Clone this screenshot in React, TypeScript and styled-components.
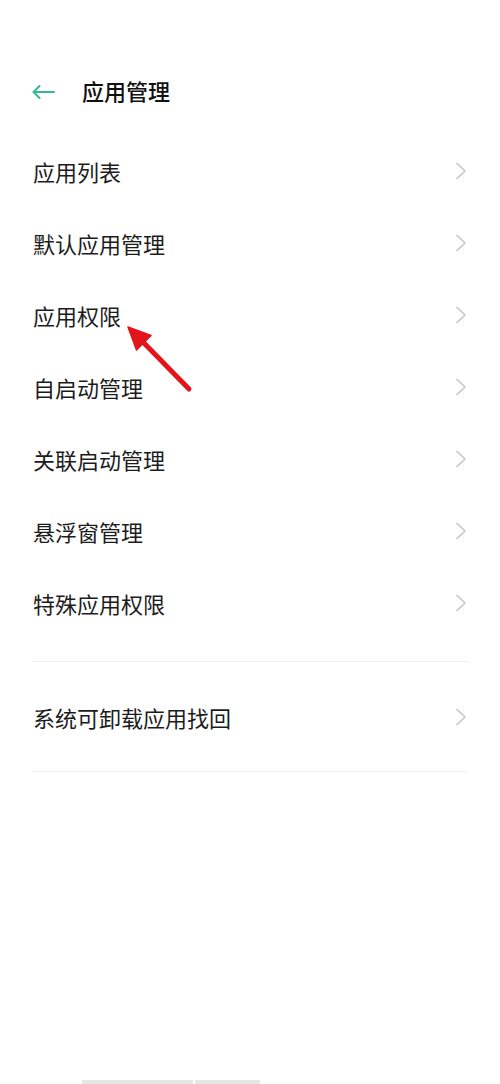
import React from 'react';
import styled, { createGlobalStyle } from 'styled-components';

const GlobalStyle = createGlobalStyle`
  html,
  body {
    margin: 0;
    padding: 0;
    background-color: #ffffff;
  }

  body {
    overflow: hidden;
    font-family: 'Noto Sans CJK SC', 'Noto Sans', sans-serif;
    color: #1c1c1c;
  }
`;

const Page = styled.div`
  position: relative;
  width: 500px;
  height: 1084px;
  display: flex;
  flex-direction: column;
  padding-top: 62px;
  box-sizing: border-box;
  background: #ffffff;
`;

const Header = styled.div`
  height: 56px;
  display: flex;
  align-items: center;
  padding-left: 31px;
`;

const BackButton = styled.button`
  width: 24px;
  height: 24px;
  padding: 0;
  border: none;
  background: none;
  display: flex;
  align-items: center;
  justify-content: center;
  margin-right: 27px;
  margin-top: 4px;
`;

const Title = styled.h1`
  margin: 0;
  font-size: 22px;
  font-weight: 500;
  color: #111111;
  line-height: 1;
`;

const List = styled.ul<{ $top?: number }>`
  list-style: none;
  margin: ${(p) => p.$top ?? 0}px 0 0;
  padding: 0;
`;

const Row = styled.li<{ $height?: number }>`
  height: ${(p) => p.$height ?? 72}px;
  display: flex;
  align-items: center;
  justify-content: space-between;
  padding: 0 33px 0 33px;
`;

const Label = styled.span`
  font-size: 22px;
  font-weight: 400;
  line-height: 1;
  color: #1c1c1c;
`;

const Divider = styled.hr<{ $top?: number }>`
  margin: ${(p) => p.$top ?? 0}px 32px 0;
  border: none;
  height: 1px;
  background: #efefef;
`;

const Pointer = styled.svg`
  position: absolute;
  left: 120px;
  top: 320px;
  width: 80px;
  height: 80px;
`;

const Footer = styled.div`
  margin-top: auto;
  height: 4px;
  display: flex;
  gap: 2px;
  padding-left: 82px;
`;

const FooterBlock = styled.div<{ $w: number }>`
  width: ${(p) => p.$w}px;
  background: #e6e6e6;
`;

const BackIcon = () => (
  <svg width="23" height="14" viewBox="0 0 23 14" fill="none">
    <path
      d="M22 7H1.5M7.5 1L1.5 7L7.5 13"
      stroke="#35b894"
      strokeWidth="2"
      strokeLinecap="round"
      strokeLinejoin="round"
    />
  </svg>
);

const Chevron = () => (
  <svg width="12" height="18" viewBox="0 0 12 18" fill="none">
    <path
      d="M2 1.5L10 9L2 16.5"
      stroke="#c6c6c6"
      strokeWidth="1.7"
      strokeLinecap="round"
      strokeLinejoin="round"
    />
  </svg>
);

const mainItems = [
  '应用列表',
  '默认应用管理',
  '应用权限',
  '自启动管理',
  '关联启动管理',
  '悬浮窗管理',
  '特殊应用权限',
];

export default function App() {
  return (
    <Page>
      <GlobalStyle />
      <Header>
        <BackButton aria-label="返回">
          <BackIcon />
        </BackButton>
        <Title>应用管理</Title>
      </Header>

      <List $top={17}>
        {mainItems.map((item) => (
          <Row key={item}>
            <Label>{item}</Label>
            <Chevron />
          </Row>
        ))}
      </List>

      <Divider $top={22} />
      <List>
        <Row $height={109}>
          <Label>系统可卸载应用找回</Label>
          <Chevron />
        </Row>
      </List>
      <Divider />

      <Pointer viewBox="0 0 80 80">
        <path d="M21 20L69 69" stroke="#e3141b" strokeWidth="5" strokeLinecap="round" />
        <path d="M8 7L31 15.5L16.5 30Z" fill="#e3141b" stroke="#e3141b" strokeWidth="1.5" strokeLinejoin="round" />
      </Pointer>

      <Footer>
        <FooterBlock $w={111} />
        <FooterBlock $w={65} />
      </Footer>
    </Page>
  );
}
